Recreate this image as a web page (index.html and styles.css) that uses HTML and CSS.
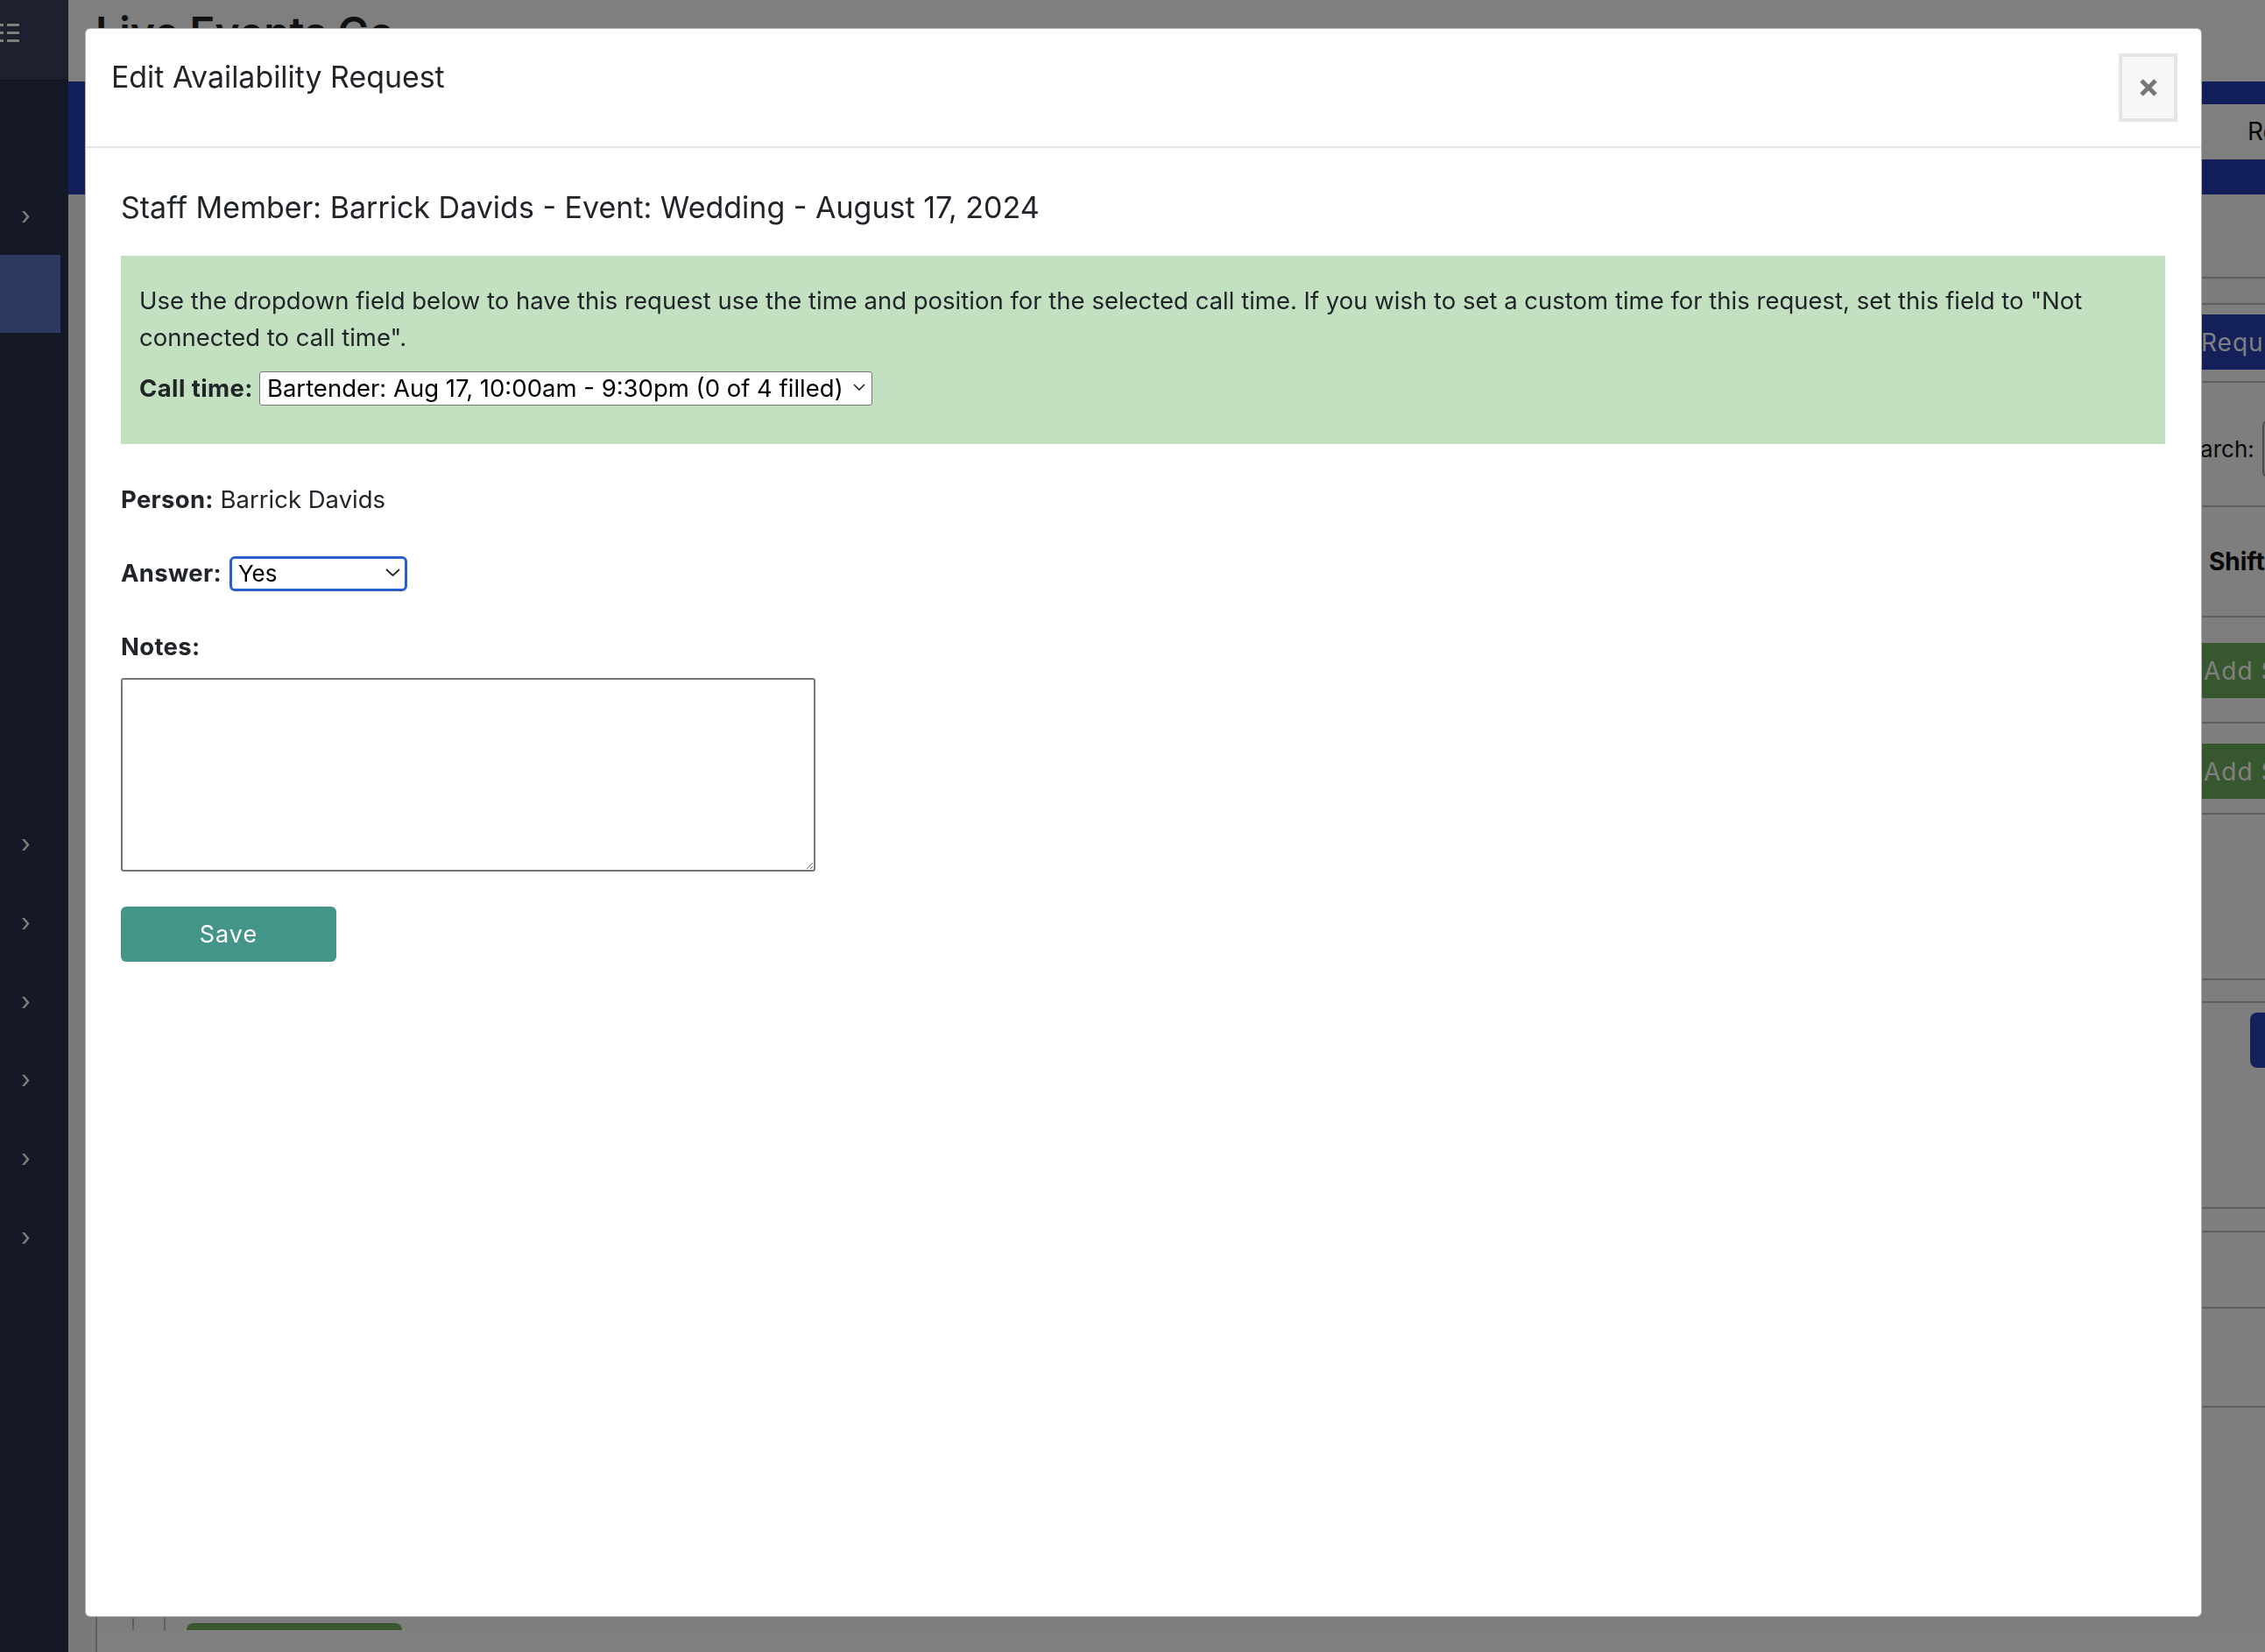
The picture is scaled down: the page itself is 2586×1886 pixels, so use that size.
FILE: index.html
```html
<!DOCTYPE html>
<html lang="en">
<head>
    <meta charset="UTF-8">
    <title>Edit Availability Request</title>
    <link rel="stylesheet" href="styles.css">
</head>
<body>
    <div class="page">
        <aside class="sidebar">
            <div class="sidebar-top">
                <svg class="menu-icon" width="24" height="24" viewBox="0 0 24 24">
                    <rect x="0" y="0" width="4" height="3"/>
                    <rect x="8" y="0" width="14" height="3"/>
                    <rect x="0" y="9" width="4" height="3"/>
                    <rect x="8" y="9" width="14" height="3"/>
                    <rect x="0" y="18" width="4" height="3"/>
                    <rect x="8" y="18" width="14" height="3"/>
                </svg>
            </div>
            <nav class="side-nav">
                <div class="nav-item"><span class="chev">&rsaquo;</span></div>
                <div class="nav-item active"></div>
                <div class="nav-item"></div>
                <div class="nav-item"></div>
                <div class="nav-item"></div>
                <div class="nav-item"></div>
                <div class="nav-item"></div>
                <div class="nav-item"></div>
                <div class="nav-item"><span class="chev">&rsaquo;</span></div>
                <div class="nav-item"><span class="chev">&rsaquo;</span></div>
                <div class="nav-item"><span class="chev">&rsaquo;</span></div>
                <div class="nav-item"><span class="chev">&rsaquo;</span></div>
                <div class="nav-item"><span class="chev">&rsaquo;</span></div>
                <div class="nav-item"><span class="chev">&rsaquo;</span></div>
            </nav>
        </aside>

        <main class="main">
            <header class="topbar">
                <h1>Live Events Co</h1>
            </header>
            <div class="bluebar">
                <div class="spacer"></div>
                <div class="tail">
                    <div class="tab">Reports</div>
                </div>
            </div>
            <div class="content">
                <div class="card">
                    <div class="row row-a"></div>
                    <div class="row row-b"></div>
                    <div class="row row-c">
                        <div class="spacer"></div>
                        <div class="tail"><button class="bg-btn blue">Request Availability</button></div>
                    </div>
                    <div class="row row-d">
                        <div class="spacer"></div>
                        <div class="tail search">
                            <span class="search-label">Search:</span>
                            <span class="search-box"></span>
                        </div>
                    </div>
                    <div class="row row-e">
                        <div class="spacer"></div>
                        <div class="tail"><span class="th">Shift</span></div>
                    </div>
                    <div class="row row-f">
                        <div class="spacer"></div>
                        <div class="tail"><button class="bg-btn green">Add Staff</button></div>
                    </div>
                    <div class="row row-g">
                        <div class="spacer"></div>
                        <div class="tail"><button class="bg-btn green">Add Staff</button></div>
                    </div>
                    <div class="row row-h"></div>
                    <div class="row row-i"></div>
                    <div class="row row-j">
                        <div class="spacer"></div>
                        <div class="tail"><button class="bg-btn navy">Send</button></div>
                    </div>
                    <div class="row row-k"></div>
                    <div class="row row-l"></div>
                    <div class="row row-m"></div>
                    <div class="row row-last">
                        <span class="cell"></span>
                        <span class="cell narrow"></span>
                        <span class="stub-btn"></span>
                    </div>
                    <div class="card-footer"></div>
                </div>
            </div>
        </main>
    </div>

    <div class="overlay">
        <div class="modal">
            <div class="modal-header">
                <h2 class="modal-title">Edit Availability Request</h2>
                <button class="close-btn" aria-label="Close">
                    <svg width="22" height="22" viewBox="0 0 22 22">
                        <path d="M3 3 L19 19 M19 3 L3 19" stroke="#777" stroke-width="5" fill="none"/>
                    </svg>
                </button>
            </div>
            <div class="modal-body">
                <h4 class="request-title">Staff Member: Barrick Davids - Event: Wedding - August 17, 2024</h4>

                <div class="alert">
                    <p>Use the dropdown field below to have this request use the time and position for the selected call time. If you wish to set a custom time for this request, set this field to "Not connected to call time".</p>
                    <div class="field-row call-row">
                        <label>Call time:</label>
                        <span class="select-wrap">
                            <select class="call-select">
                                <option>Bartender: Aug 17, 10:00am - 9:30pm (0 of 4 filled)</option>
                                <option>Not connected to call time</option>
                            </select>
                            <svg class="chev-down small" width="14" height="8" viewBox="0 0 14 8"><path d="M1 1 L7 7 L13 1" stroke="#222" stroke-width="1.6" fill="none"/></svg>
                        </span>
                    </div>
                </div>

                <p class="person"><b>Person:</b> Barrick Davids</p>

                <div class="field-row answer-row">
                    <label>Answer:</label>
                    <span class="select-wrap">
                        <select class="answer-select">
                            <option>Yes</option>
                            <option>No</option>
                            <option>Maybe</option>
                        </select>
                        <svg class="chev-down" width="17" height="9" viewBox="0 0 17 9"><path d="M1 1 L8.5 8 L16 1" stroke="#222" stroke-width="1.8" fill="none"/></svg>
                    </span>
                </div>

                <p class="notes-label"><b>Notes:</b></p>
                <textarea class="notes"></textarea>

                <button class="save-btn">Save</button>
            </div>
        </div>
    </div>
</body>
</html>
```

FILE: styles.css
```css
html, body {
    margin: 0;
    padding: 0;
    width: 2586px;
    height: 1886px;
    overflow: hidden;
}
body {
    font-family: Inter, "Noto Sans", sans-serif;
    color: #212529;
}

/* page behind the modal */
.page {
    display: flex;
    height: 1886px;
}
.sidebar {
    width: 78px;
    flex-shrink: 0;
    background-color: #2a304c;
}
.sidebar-top {
    height: 92px;
    background-color: #3a405e;
    border-bottom: 1px solid #222638;
    padding-top: 27px;
    box-sizing: border-box;
}
.menu-icon {
    display: block;
    fill: #ffffff;
}
.side-nav {
    padding-top: 109px;
}
.nav-item {
    height: 89.7px;
    display: flex;
    align-items: center;
    padding-left: 24px;
    box-sizing: border-box;
}
.nav-item.active {
    background-color: #5c72c4;
    margin-right: 9px;
}
.chev {
    color: #ffffff;
    font-size: 28px;
    line-height: 1;
}
.main {
    flex: 1;
    display: flex;
    flex-direction: column;
    background-color: #f4f4f4;
    overflow: hidden;
}
.topbar {
    height: 93px;
    background-color: #ffffff;
    padding: 8px 0 0 31px;
    box-sizing: border-box;
}
.topbar h1 {
    margin: 0;
    font-size: 48px;
    font-weight: 600;
    line-height: 1.21;
    color: #222;
}
.bluebar {
    height: 129px;
    background-color: #263eb4;
    display: flex;
    padding-top: 26px;
    box-sizing: border-box;
}
.spacer {
    flex: 1;
}
.tail {
    flex: 0 0 300px;
    min-width: 0;
    margin-right: -228px;
}
.tab {
    height: 63px;
    background-color: #ffffff;
    padding-left: 52px;
    font-size: 28px;
    line-height: 63px;
    color: #111;
}
.content {
    flex: 1;
    padding-left: 31px;
    display: flex;
}
.card {
    flex: 1;
    background-color: #fdfdfd;
    border-left: 2px solid #bebebe;
}
.row {
    display: flex;
    align-items: flex-start;
    border-bottom: 2px solid #bebebe;
    box-sizing: border-box;
}
.row-a { height: 96px; }
.row-b { height: 30px; background-color: #f8f8f8; }
.row-c { height: 89px; padding-top: 11px; }
.row-d { height: 142px; padding-top: 43px; }
.row-e { height: 126px; align-items: center; }
.row-f { height: 121px; padding-top: 29px; }
.row-g { height: 104px; padding-top: 23px; }
.row-h { height: 189px; }
.row-i { height: 26px; }
.row-j { height: 235px; padding-top: 11px; }
.row-k { height: 27px; }
.row-l { height: 87px; }
.row-m { height: 113px; }
.row-last {
    height: 254px;
    border-bottom: none;
    align-items: flex-end;
}
.cell {
    width: 40px;
    height: 14px;
    border-right: 2px solid #bebebe;
}
.cell.narrow {
    width: 34px;
}
.stub-btn {
    width: 246px;
    height: 8px;
    margin-left: 24px;
    background-color: #6eb05e;
    border-radius: 8px 8px 0 0;
}
.card-footer {
    height: 25px;
    background-color: #ffffff;
}

.bg-btn {
    height: 63px;
    border: none;
    font-family: Inter, sans-serif;
    font-size: 28px;
    color: #ffffff;
    letter-spacing: 1px;
    text-align: left;
    white-space: nowrap;
}
.bg-btn.blue {
    background-color: #2640b4;
    margin-left: -14px;
    padding-left: 13px;
    width: 320px;
}
.bg-btn.green {
    background-color: #6eb05e;
    margin-left: -20px;
    padding-left: 22px;
    width: 320px;
}
.bg-btn.navy {
    background-color: #2640b4;
    margin-left: 55px;
    padding-left: 60px;
    width: 200px;
    border-radius: 8px;
}
.search {
    display: flex;
    align-items: center;
    gap: 9px;
    font-size: 26px;
    color: #111;
}
.search-label {
    margin-left: -34px;
    white-space: nowrap;
}
.search-box {
    flex-shrink: 0;
    width: 260px;
    height: 61px;
    border: 2px solid #999;
    border-radius: 6px;
    background: #fff;
}
.th {
    display: block;
    padding-left: 8px;
    font-size: 28px;
    font-weight: 700;
    color: #111;
}

/* modal */
.overlay {
    position: fixed;
    inset: 0;
    background-color: rgba(0, 0, 0, 0.5);
    padding: 32px 72px 40px 97px;
    display: flex;
}
.modal {
    flex: 1;
    display: flex;
    flex-direction: column;
    background-color: #fff;
    border: 1px solid rgba(0, 0, 0, 0.3);
    border-radius: 6px;
}
.modal-header {
    height: 136px;
    box-sizing: border-box;
    display: flex;
    justify-content: space-between;
    align-items: flex-start;
    padding: 28px 27px 0 29px;
    border-bottom: 2px solid #e1e4e8;
}
.modal-title {
    margin: 7px 0 0 0;
    font-size: 33.9px;
    font-weight: 400;
    line-height: 40px;
    color: #212529;
}
.close-btn {
    width: 67px;
    height: 78px;
    background-color: #f6f6f6;
    border: 4px solid #e4e4e4;
    display: flex;
    align-items: center;
    justify-content: center;
    padding: 0;
}
.modal-body {
    padding: 47px 41px 0 40px;
}
.request-title {
    margin: 0 0 35px 0;
    font-size: 34px;
    font-weight: 400;
    line-height: 41px;
}
.alert {
    background-color: #c3e0c0;
    padding: 30px 21px 43px 21px;
    font-size: 27.5px;
    line-height: 42px;
}
.alert p {
    margin: 0;
}
.field-row {
    display: flex;
    align-items: baseline;
    gap: 9px;
    font-size: 27.5px;
    line-height: 42px;
}
.field-row label {
    font-weight: 700;
    letter-spacing: 0.3px;
}
.call-row {
    margin-top: 16px;
    gap: 7px;
}
.call-row label {
    letter-spacing: 0.4px;
}
.select-wrap {
    position: relative;
    display: inline-block;
}
.select-wrap select {
    appearance: none;
    -webkit-appearance: none;
    font-family: Inter, sans-serif;
    font-size: 26px;
    line-height: 31px;
    color: #000;
    background-color: #fff;
    box-sizing: border-box;
}
.select-wrap .call-select {
    width: 700px;
    height: 39px;
    border: 1px solid #767676;
    border-radius: 3px;
    padding: 0 0 0 8px;
    font-size: 27.5px;
}
.answer-select {
    width: 203px;
    height: 40px;
    border: 3px solid #2b5fcc;
    border-radius: 6px;
    padding: 0 0 0 7px;
}
.chev-down {
    position: absolute;
    right: 8px;
    top: 16px;
    pointer-events: none;
}
.chev-down.small {
    right: 8px;
    top: 16px;
}
.person {
    margin: 42px 0 0 0;
    font-size: 27.5px;
    line-height: 42px;
}
.person b {
    letter-spacing: 0.3px;
}
.answer-row {
    margin-top: 42px;
}
.notes-label {
    margin: 42px 0 0 0;
    font-size: 27.5px;
    line-height: 42px;
    letter-spacing: 0.3px;
}
.notes {
    display: block;
    margin-top: 15px;
    width: 793px;
    height: 221px;
    box-sizing: border-box;
    border: 2px solid #767676;
    border-radius: 3px;
}
.save-btn {
    display: block;
    margin-top: 40px;
    width: 246px;
    height: 63px;
    background-color: #43958a;
    border: none;
    border-radius: 6px;
    color: #fff;
    font-family: Inter, sans-serif;
    font-size: 27px;
    letter-spacing: 1px;
}
```
